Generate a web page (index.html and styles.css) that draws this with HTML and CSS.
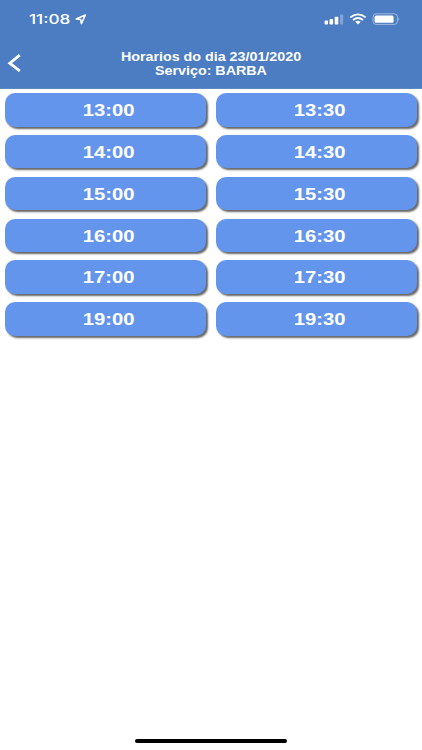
FILE: index.html
```html
<!DOCTYPE html>
<html lang="pt-BR">
<head>
    <meta charset="UTF-8">
    <meta name="viewport" content="width=device-width, initial-scale=1.0">
    <title>Horarios</title>
    <link rel="stylesheet" href="styles.css">
</head>
<body>
    <header class="header">
        <div class="status">
            <span class="clock">11:08</span>
            <svg class="location" width="12" height="11" viewBox="0 0 12 11">
                <path d="M1.2 5 L10.4 1 L6.4 9.6 L5.6 5.4 Z" fill="none" stroke="#fff" stroke-width="1.5" stroke-linejoin="round"/>
            </svg>
            <svg class="indicators" width="76" height="14" viewBox="0 0 76 14">
                <g fill="#fff">
                    <rect x="0.6" y="8.6" width="3.4" height="4" rx="0.8"/>
                    <rect x="5.5" y="7.1" width="3.6" height="5.5" rx="0.8"/>
                    <rect x="10.7" y="4.8" width="3.6" height="7.8" rx="0.8"/>
                    <rect x="16" y="2.4" width="3.2" height="10.2" rx="0.8" opacity="0.3"/>
                    <path d="M31.3 9.8 Q34 7.8 36.7 9.8 L34 12.4 Z"/>
                </g>
                <g fill="none" stroke="#fff" stroke-width="1.8">
                    <path d="M26.3 5.4 Q34 -0.6 41.7 5.4"/>
                    <path d="M29 8 Q34 4.1 39 8"/>
                </g>
                <rect x="49" y="1.8" width="24.4" height="10.6" rx="3" fill="none" stroke="#fff" opacity="0.45"/>
                <rect x="50.6" y="3.4" width="19" height="7.4" rx="1.6" fill="#fff"/>
                <path d="M74.4 5.2 Q76.4 7.1 74.4 9 Z" fill="#fff" opacity="0.45"/>
            </svg>
        </div>
        <div class="navbar">
            <svg class="back" width="14" height="18" viewBox="0 0 14 18">
                <path d="M12.8 1.2 L2.8 9.2 L12.8 17" fill="none" stroke="#fff" stroke-width="2.8"/>
            </svg>
            <div class="title">
                <div class="line">Horarios do dia 23/01/2020</div>
                <div class="line">Serviço: BARBA</div>
            </div>
        </div>
    </header>

    <main class="times">
        <button class="time"><span>13:00</span></button>
        <button class="time"><span>13:30</span></button>
        <button class="time"><span>14:00</span></button>
        <button class="time"><span>14:30</span></button>
        <button class="time"><span>15:00</span></button>
        <button class="time"><span>15:30</span></button>
        <button class="time"><span>16:00</span></button>
        <button class="time"><span>16:30</span></button>
        <button class="time"><span>17:00</span></button>
        <button class="time"><span>17:30</span></button>
        <button class="time"><span>19:00</span></button>
        <button class="time"><span>19:30</span></button>
    </main>

    <div class="home-bar"></div>
</body>
</html>
```

FILE: styles.css
```css
* { box-sizing: border-box; }
body { margin: 0; height: 750px; display: flex; flex-direction: column; background: #fff; font-family: "Liberation Sans", Arial, sans-serif; overflow: hidden; }

.header { height: 88.5px; background: #4c7dc3; color: #fff; border-bottom: 1px solid #5f87c0; }
.status { display: flex; height: 38px; padding: 0 22px 0 29px; align-items: center; }
.clock { width: 41px; font-family: Inter, "Liberation Sans", sans-serif; font-size: 13px; font-weight: 500; line-height: 16px; white-space: nowrap; transform: scaleX(1.32); transform-origin: left; }
.location { margin-left: 5px; }
.indicators { margin-left: auto; }

.navbar { display: flex; height: 50px; padding: 0 7px; align-items: center; }
.back { width: 14px; }
.title { flex: 1; margin-right: 14px; padding-top: 1px; text-align: center; font-size: 12px; font-weight: bold; line-height: 14px; }
.line { transform: scaleX(1.19); }

.times { display: grid; grid-template-columns: 1fr 1fr; gap: 8.3px 10px; padding: 4.7px 5px 0; }
.time { height: 33.5px; padding: 2.4px 0 0 6px; border: none; border-radius: 10px; background: #6495ed; color: #fff; font-family: inherit; font-size: 17px; font-weight: bold; line-height: 20px; box-shadow: 2px 2px 2px rgba(0, 0, 0, 0.6); }
.time span { display: inline-block; transform: scaleX(1.19); }

.home-bar { width: 152px; height: 4px; margin: auto auto 7px; border-radius: 2px; background: #000; }
```
